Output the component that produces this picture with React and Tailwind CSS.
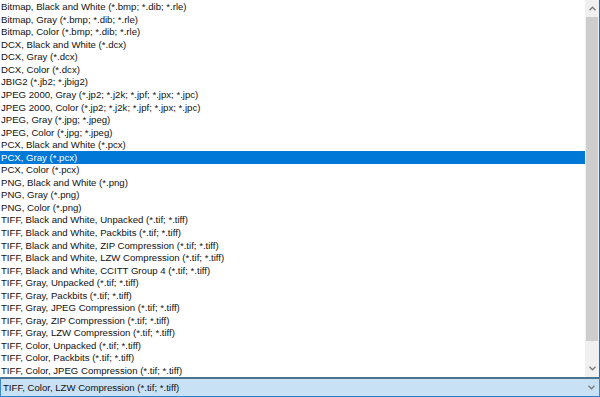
import React from "react";

const formats = [
  "Bitmap, Black and White (*.bmp; *.dib; *.rle)",
  "Bitmap, Gray (*.bmp; *.dib; *.rle)",
  "Bitmap, Color (*.bmp; *.dib; *.rle)",
  "DCX, Black and White (*.dcx)",
  "DCX, Gray (*.dcx)",
  "DCX, Color (*.dcx)",
  "JBIG2 (*.jb2; *.jbig2)",
  "JPEG 2000, Gray (*.jp2; *.j2k; *.jpf; *.jpx; *.jpc)",
  "JPEG 2000, Color (*.jp2; *.j2k; *.jpf; *.jpx; *.jpc)",
  "JPEG, Gray (*.jpg; *.jpeg)",
  "JPEG, Color (*.jpg; *.jpeg)",
  "PCX, Black and White (*.pcx)",
  "PCX, Gray (*.pcx)",
  "PCX, Color (*.pcx)",
  "PNG, Black and White (*.png)",
  "PNG, Gray (*.png)",
  "PNG, Color (*.png)",
  "TIFF, Black and White, Unpacked (*.tif; *.tiff)",
  "TIFF, Black and White, Packbits (*.tif; *.tiff)",
  "TIFF, Black and White, ZIP Compression (*.tif; *.tiff)",
  "TIFF, Black and White, LZW Compression (*.tif; *.tiff)",
  "TIFF, Black and White, CCITT Group 4 (*.tif; *.tiff)",
  "TIFF, Gray, Unpacked (*.tif; *.tiff)",
  "TIFF, Gray, Packbits (*.tif; *.tiff)",
  "TIFF, Gray, JPEG Compression (*.tif; *.tiff)",
  "TIFF, Gray, ZIP Compression (*.tif; *.tiff)",
  "TIFF, Gray, LZW Compression (*.tif; *.tiff)",
  "TIFF, Color, Unpacked (*.tif; *.tiff)",
  "TIFF, Color, Packbits (*.tif; *.tiff)",
  "TIFF, Color, JPEG Compression (*.tif; *.tiff)",
];

const selected = "PCX, Gray (*.pcx)";

// small chevron used by the scrollbar and the combo button
const Chevron = ({ up }) => (
  <svg width="7" height="5" viewBox="0 0 7 5" className={up ? "rotate-180" : ""}>
    <path d="M0.5 0.8 L3.5 3.8 L6.5 0.8" fill="none" stroke="#7a7a7a" strokeWidth="1.3" />
  </svg>
);

const App = () => {
  return (
    <div
      className="w-[600px] h-[397px] flex flex-col bg-white overflow-hidden text-[9.6px] text-[#111]"
      style={{ fontFamily: '"Liberation Sans", Arial, sans-serif' }}
    >
      {/* Dropdown list */}
      <div className="h-[377px] flex border-r border-[#0078d7]">
        <div className="flex-1 flex flex-col pt-[0.7px]">
          {formats.map((f) => (
            <div
              key={f}
              className={
                "h-[12.55px] shrink-0 flex items-center pl-[1px] leading-none whitespace-nowrap " +
                (f === selected ? "bg-[#0078d7] text-white" : "")
              }
            >
              {f}
            </div>
          ))}
        </div>

        {/* Scrollbar */}
        <div className="w-[14px] bg-[#f0f0f0] flex flex-col">
          <div className="h-[17px] flex items-center justify-center">
            <Chevron up />
          </div>
          <div className="flex-1 px-[1px] pb-[19px]">
            <div className="h-full bg-[#cdcdcd]" />
          </div>
          <div className="h-[17px] flex items-center justify-center">
            <Chevron />
          </div>
        </div>
      </div>

      {/* Combo box */}
      <div className="h-[20px] flex items-center border-t-2 border-t-[#4d7290] border-b border-b-[#2f7fc4] border-l border-l-[#3c88c9] border-r border-r-[#3c88c9] bg-[#c9e1f5]">
        <div className="flex-1 pl-[2px] leading-none whitespace-nowrap">TIFF, Color, LZW Compression (*.tif; *.tiff)</div>
        <div className="w-[16px] flex items-center justify-center">
          <Chevron />
        </div>
      </div>
    </div>
  );
};

export default App;
